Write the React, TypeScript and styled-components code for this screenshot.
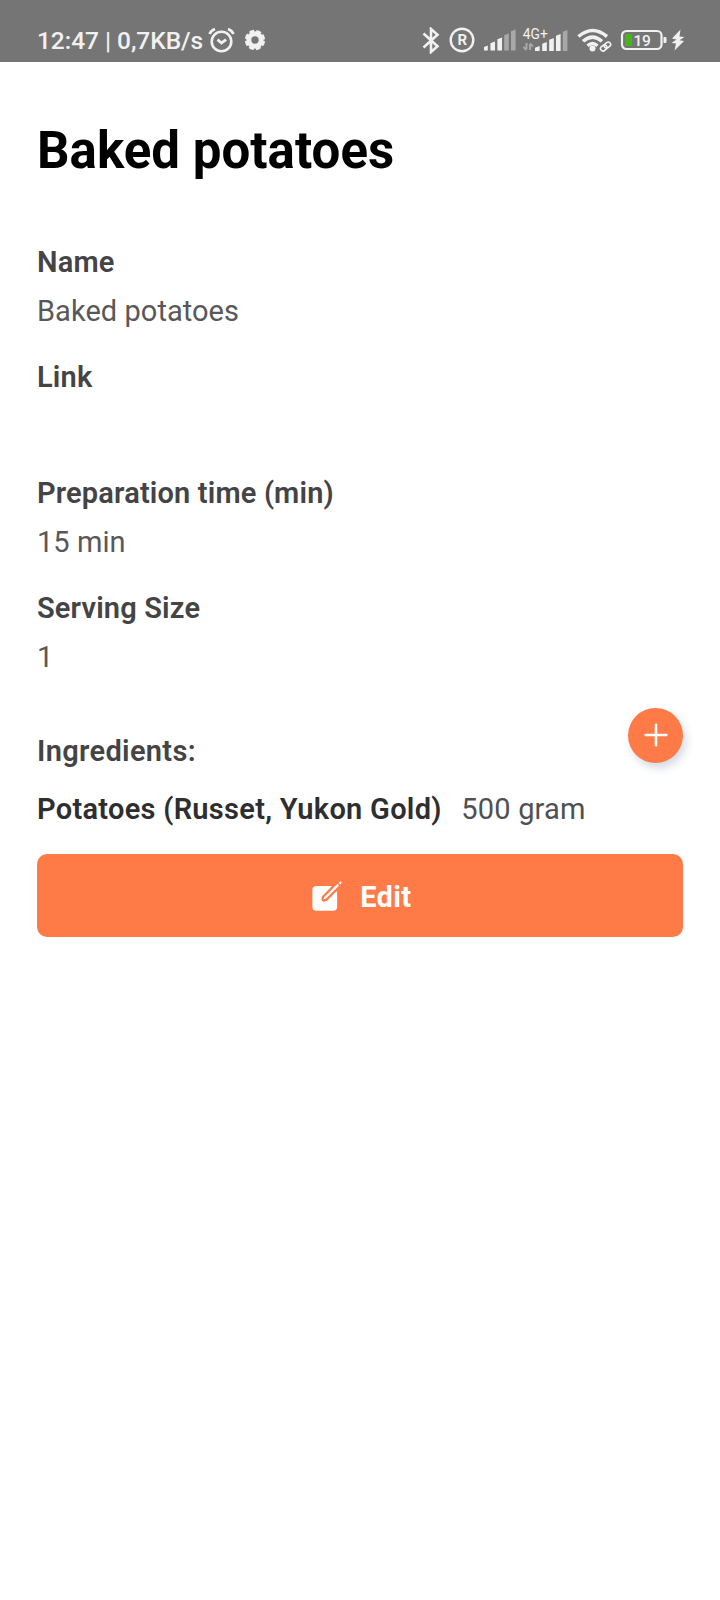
import React from "react";
import styled, { createGlobalStyle } from "styled-components";
import { IoCreate } from "react-icons/io5";

const GlobalStyle = createGlobalStyle`
  * { box-sizing: border-box; }
  body {
    margin: 0;
    background: #fff;
    font-family: Roboto, "Liberation Sans", sans-serif;
  }
  svg { display: block; flex: none; }
`;

const Screen = styled.div`
  width: 720px;
  min-height: 1600px;
  background: #fff;
`;

const StatusBar = styled.header`
  display: flex;
  justify-content: space-between;
  align-items: flex-start;
  height: 62px;
  padding: 23px 35px 0 37px;
  background: #757575;
  color: #f1f1f1;
`;

const StatusGroup = styled.div`
  display: flex;
  align-items: center;
  height: 34px;
`;

const Clock = styled.span`
  width: 170.5px;
  padding-top: 2px;
  font-size: 24.5px;
  line-height: 34px;
  font-weight: 500;
  letter-spacing: -0.05px;
  white-space: nowrap;
`;

const Glyph = styled.svg<{ $gap?: number }>`
  margin-left: ${(p) => p.$gap ?? 0}px;
`;

const Content = styled.main`
  display: flex;
  flex-direction: column;
  padding: 57px 37px 0;
`;

const Title = styled.h1`
  margin: 0 0 49px;
  font-size: 51px;
  line-height: 64px;
  font-weight: 700;
  letter-spacing: 0.04px;
  color: #000;
`;

const Field = styled.section`
  height: 115.3px;
`;

const Label = styled.h2`
  margin: 0;
  font-size: 29px;
  line-height: 60px;
  font-weight: 600;
  letter-spacing: 0.16px;
  color: #444446;
`;

const Value = styled.p`
  margin: 0;
  font-size: 29px;
  line-height: 38px;
  letter-spacing: 0.05px;
  color: #58585a;
`;

const IngredientsHeader = styled.div`
  display: flex;
  justify-content: space-between;
  align-items: flex-start;
  height: 83px;
  margin-top: 14px;
`;

const IngredientsLabel = styled(Label)`
  padding-top: 13.4px;
  letter-spacing: 0.32px;
`;

const AddButton = styled.button`
  display: grid;
  place-items: center;
  width: 55px;
  height: 55px;
  margin-top: 0.8px;
  padding: 0;
  border: 0;
  border-radius: 50%;
  background: #fe7b47;
  color: #fff;
  box-shadow: 3px 5px 9px rgba(40, 70, 110, 0.2);
`;

const Ingredient = styled.div`
  display: flex;
  align-items: center;
  gap: 19.5px;
  height: 37px;
  font-size: 29px;
`;

const IngredientName = styled.span`
  font-weight: 600;
  letter-spacing: 0.29px;
  color: #2e2e30;
`;

const Amount = styled.span`
  letter-spacing: 0.2px;
  color: #505052;
`;

const EditButton = styled.button`
  display: flex;
  justify-content: center;
  align-items: center;
  gap: 15.5px;
  height: 83px;
  margin-top: 27px;
  padding: 0;
  border: 0;
  border-radius: 10px;
  background: #fe7b47;
  color: #fff;
  font: 700 29px Roboto, "Liberation Sans", sans-serif;
`;

const EditLabel = styled.span`
  padding-top: 2px;
  letter-spacing: 0.3px;
`;

const AlarmIcon = () => (
  <Glyph width="27" height="27" viewBox="0 0 27 27" fill="none" stroke="currentColor">
    <circle cx="13.5" cy="14.5" r="9.8" strokeWidth="2.6" />
    <path d="M9.5 12.7l4 3.3 4.6-3.3" strokeWidth="2.8" />
    <path d="M1.5 7Q3 3.5 7 2M25.5 7Q24 3.5 20 2" strokeWidth="2.8" />
  </Glyph>
);

const GearIcon = () => (
  <Glyph $gap={9} width="22" height="22" viewBox="0 0 22 22" fill="none" stroke="currentColor">
    <circle cx="11" cy="11" r="6.2" strokeWidth="5" />
    <circle cx="11" cy="11" r="8.8" strokeWidth="2.8" strokeDasharray="4.8 2.11" strokeDashoffset="-1.05" />
  </Glyph>
);

const BluetoothIcon = () => (
  <Glyph width="18" height="27" viewBox="0 0 18 27" fill="none" stroke="currentColor" strokeWidth="2.6">
    <path d="M1.5 6.5L15.5 19.3 9 25V2l6.5 5.7L1.5 20.5" />
  </Glyph>
);

const RoamingIcon = () => (
  <Glyph $gap={9} width="26" height="26" viewBox="0 0 26 26">
    <circle cx="13" cy="13" r="11.3" fill="none" stroke="currentColor" strokeWidth="2.4" />
    <text x="13.3" y="18.4" textAnchor="middle" fontSize="15" fontWeight="700" fill="currentColor">R</text>
  </Glyph>
);

const bars = [
  [0, 16, 5],
  [7.2, 12, 9],
  [14.2, 8, 13],
  [21, 4, 17],
  [27.8, 0, 21],
];

const Bars = ({ active, x = 0, y = 0 }: { active: number; x?: number; y?: number }) => (
  <g transform={`translate(${x} ${y})`}>
    {bars.map(([bx, by, h], i) => (
      <path
        key={bx}
        d={`M${bx} ${by + 1.8}l4.6-1.8v${h}h-4.6z`}
        fill={i < active ? "#f1f1f1" : "#a8a8a8"}
      />
    ))}
  </g>
);

const SignalIcon = () => (
  <Glyph $gap={8.5} width="34" height="22" viewBox="0 0 34 22">
    <Bars active={3} x={-0.8} y={0.5} />
  </Glyph>
);

const DataSignalIcon = () => (
  <Glyph $gap={4.5} width="48" height="26" viewBox="0 0 48 26">
    <Bars active={4} x={13} y={3} />
    <text x="0.8" y="11.5" fontSize="13.8" fill="currentColor" stroke="#757575" strokeWidth="1.5" paintOrder="stroke">4G+</text>
    <path d="M4.5 16v6M1.5 20l3 3M8 23v-6M8 16.500l3 3" stroke="#a8a8a8" strokeWidth="2" fill="none" />
  </Glyph>
);

const WifiIcon = () => (
  <Glyph $gap={7} width="35" height="25" viewBox="0 0 35 25" fill="none" stroke="currentColor">
    <path d="M1.5 8.5Q15.5-3.5 30 8.5" strokeWidth="3.6" />
    <path d="M6 13.3q9.5-8.5 19 0" strokeWidth="3.5" />
    <path d="M10.5 17.8q5-4.5 10 0" strokeWidth="3.3" />
    <circle cx="15.5" cy="20.5" r="3" fill="currentColor" stroke="none" />
    <g transform="rotate(-38 28.5 18.5)" stroke="#757575" strokeWidth="4">
      <rect x="22.8" y="16.2" width="6.8" height="4.8" rx="2.4" />
      <rect x="27.4" y="16.2" width="6.8" height="4.8" rx="2.4" />
    </g>
    <g transform="rotate(-38 28.5 18.5)" strokeWidth="1.6">
      <rect x="22.8" y="16.2" width="6.8" height="4.8" rx="2.4" />
      <rect x="27.4" y="16.2" width="6.8" height="4.8" rx="2.4" />
    </g>
  </Glyph>
);

const BatteryIcon = () => (
  <Glyph $gap={8} width="48" height="22" viewBox="0 0 48 22">
    <rect x="2" y="2" width="39.5" height="18" rx="4.5" fill="none" stroke="currentColor" strokeWidth="2.2" />
    <rect x="5" y="5" width="7" height="12" rx="1.5" fill="#43b716" />
    <path d="M43.5 8h1.8q1.2 0 1.2 1v4q0 1-1.2 1h-1.8z" fill="currentColor" />
    <text x="13.5" y="16.6" fontSize="15.5" fontWeight="500" letterSpacing="-0.3" fill="currentColor">19</text>
  </Glyph>
);

const BoltIcon = () => (
  <Glyph $gap={3} width="14" height="22" viewBox="0 0 14 22">
    <path d="M9.5 .5L1 9.5l4.5 1-5 3.5 4.5.5-1.5 7L13 12l-4.5-.8L13.5 8l-5-.5z" fill="currentColor" />
  </Glyph>
);

const PlusIcon = () => (
  <svg width="24" height="24" viewBox="0 0 24 24" stroke="currentColor" strokeWidth="2.6" strokeLinecap="round">
    <path d="M12 1.7v20.6M1.7 12h20.6" />
  </svg>
);

const fields = [
  { label: "Name", value: "Baked potatoes" },
  { label: "Link", value: "" },
  { label: "Preparation time (min)", value: "15 min" },
  { label: "Serving Size", value: "1" },
];

export default function App() {
  return (
    <Screen>
      <GlobalStyle />
      <StatusBar>
        <StatusGroup>
          <Clock>12:47 | 0,7KB/s</Clock>
          <AlarmIcon />
          <GearIcon />
        </StatusGroup>
        <StatusGroup>
          <BluetoothIcon />
          <RoamingIcon />
          <SignalIcon />
          <DataSignalIcon />
          <WifiIcon />
          <BatteryIcon />
          <BoltIcon />
        </StatusGroup>
      </StatusBar>
      <Content>
        <Title>Baked potatoes</Title>
        {fields.map((f) => (
          <Field key={f.label}>
            <Label>{f.label}</Label>
            <Value>{f.value}</Value>
          </Field>
        ))}
        <IngredientsHeader>
          <IngredientsLabel>Ingredients:</IngredientsLabel>
          <AddButton aria-label="Add ingredient">
            <PlusIcon />
          </AddButton>
        </IngredientsHeader>
        <Ingredient>
          <IngredientName>Potatoes (Russet, Yukon Gold)</IngredientName>
          <Amount>500 gram</Amount>
        </Ingredient>
        <EditButton>
          <IoCreate size={36} />
          <EditLabel>Edit</EditLabel>
        </EditButton>
      </Content>
    </Screen>
  );
}
